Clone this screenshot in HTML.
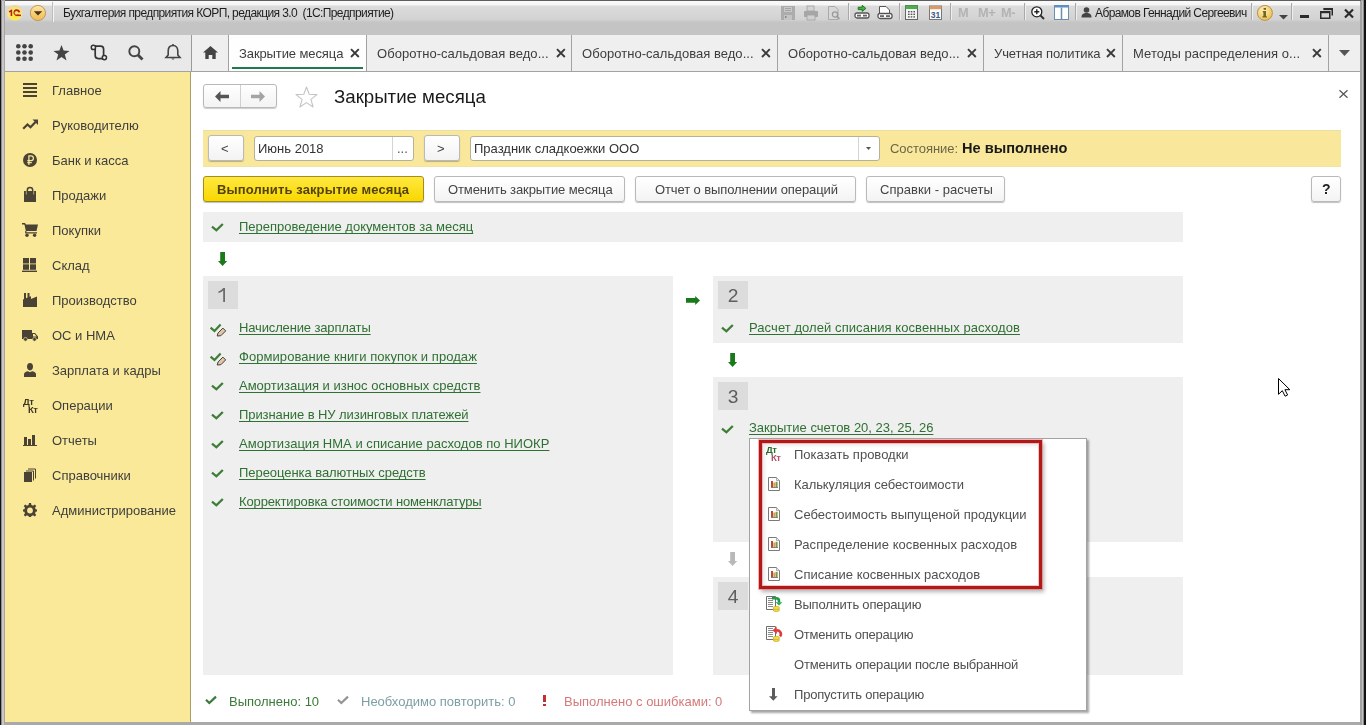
<!DOCTYPE html>
<html><head><meta charset="utf-8">
<style>
*{box-sizing:border-box;margin:0;padding:0}
html,body{width:1366px;height:725px;overflow:hidden;background:#fff;font-family:"Liberation Sans",sans-serif;font-size:13px;color:#4d4d4d}
.a{position:absolute}
.t{position:absolute;white-space:pre;line-height:15px;font-size:13px;will-change:transform}
svg{position:absolute;overflow:visible}
#win{position:absolute;left:0;top:0;width:1366px;height:725px;background:#a8a8a8;overflow:hidden}
#title{left:5px;top:0;width:1356px;height:35px;background:linear-gradient(#5e5e5e 0,#5e5e5e 1px,#fafafa 1px,#f6f6f6 5px,#dcdcdc 6px,#d2d2d2 20px,#c9c9c9 21px,#c4c4c4 23px,#c4c4c4 35px)}
#tabbar{left:5px;top:35px;width:1355px;height:37px;background:#efefef;border-bottom:1px solid #a3a3a3}
#navp{left:5px;top:35px;width:186px;height:36px;background:#e9e9e9}
#side{left:5px;top:72px;width:186px;height:650px;background:#fae998;border-right:1px solid #a89f66}
#main{left:191px;top:72px;width:1169px;height:650px;background:#fff}
.tab{position:absolute;top:35px;height:36px;border-left:1px solid #a2a2a2;background:#efefef}
.tx{position:absolute;top:44px;width:9px;height:9px}
.sep{position:absolute;top:3px;width:1px;height:17px;background:#a9a9a9;box-shadow:1px 0 0 #efefef}
.si{color:#3e3e3e}
.ic{fill:#4a4335}
.btn{position:absolute;border:1px solid #b9b9b9;border-radius:3px;background:linear-gradient(#ffffff,#f3f3f3);box-shadow:0 1px 1px rgba(0,0,0,.25)}
.inp{position:absolute;border:1px solid #b6b19a;border-radius:3px;background:#fff}
.lnk{color:#2f7033;text-decoration:underline;text-underline-offset:2px;text-decoration-thickness:1px;text-decoration-skip-ink:none}
.gblk{position:absolute;background:#efefef}
.num{will-change:transform;position:absolute;width:30px;height:28px;background:#dcdcdc;color:#5e5e5e;font-size:19.2px;line-height:29px;text-align:center}
.mi{color:#505050}
</style></head><body>
<div id="win">
  <div class="a" id="title"></div>
  
<!-- TITLE BAR -->
<svg style="left:6px;top:4px" width="18" height="18" viewBox="0 0 18 18">
 <defs><radialGradient id="g1c" cx="50%" cy="75%" r="70%"><stop offset="0" stop-color="#ffe93a"/><stop offset=".6" stop-color="#fbe87a"/><stop offset="1" stop-color="#f0d890"/></radialGradient></defs>
 <circle cx="8.8" cy="8.8" r="7.7" fill="url(#g1c)"/>
 <path d="M2.8 7.3 L5.6 5.6 L6.2 5.6 L6.2 12.1 L4.6 12.1 L4.6 7.9 L3.2 8.6 Z" fill="#b5250f"/>
 <path d="M14.2 8.2 A3.4 3.4 0 1 0 13.2 11 L11.8 10.2 A1.8 1.8 0 1 1 12.3 8.6 Z" fill="#b5250f"/>
 <rect x="9.6" y="10.6" width="5.4" height="1.5" fill="#b5250f"/>
</svg>
<svg style="left:29px;top:4px" width="18" height="18" viewBox="0 0 18 18">
 <defs><linearGradient id="gdd" x1="0" y1="0" x2="0" y2="1"><stop offset="0" stop-color="#fde7a8"/><stop offset="1" stop-color="#f2b850"/></linearGradient></defs>
 <circle cx="8.9" cy="9" r="7.6" fill="url(#gdd)" stroke="#c29a50" stroke-width="1"/>
 <path d="M4.8 7.2 L13.3 7.2 L9 11.5 Z" fill="#4a3510"/>
</svg>
<div class="a" style="left:52px;top:2px;width:1px;height:20px;background:#bdbdbd;box-shadow:1px 0 0 #f4f4f4"></div>
<div class="t" style="left:63px;top:6px;font-size:12px;letter-spacing:-0.6px;color:#1e1e1e">Бухгалтерия предприятия КОРП, редакция 3.0  (1С:Предприятие)</div>

  
<!-- TOOLBAR ICONS -->
<svg style="left:781px;top:6px" width="14" height="14" viewBox="0 0 14 14"><path d="M0 0H14V14H0Z" fill="#acacac"/><rect x="3" y="1" width="8" height="5" fill="#c9c9c9"/><path d="M4 2.5H10M4 4.5H10" stroke="#9a9a9a" stroke-width=".8"/><rect x="3" y="9" width="8" height="5" fill="#c4c4c4"/><rect x="4" y="10" width="1.5" height="2" fill="#8a8a8a"/></svg>
<svg style="left:804px;top:6px" width="14" height="14" viewBox="0 0 14 14"><rect x="3" y="0" width="7" height="5" fill="#d4d4d4" stroke="#a0a0a0" stroke-width=".8"/><rect x="0" y="5" width="14" height="6" rx="1" fill="#a6a6a6"/><rect x="3" y="9" width="8" height="5" fill="#d0d0d0" stroke="#a0a0a0" stroke-width=".8"/></svg>
<svg style="left:828px;top:6px" width="14" height="14" viewBox="0 0 14 14"><path d="M0.5 0.5H7L10 3.5V13.5H0.5Z" fill="#d8d8d8" stroke="#a9a9a9"/><circle cx="7" cy="8.5" r="2.6" fill="#d8d8d8" stroke="#9a9a9a" stroke-width="1.3"/><path d="M8.8 10.3L11.5 13" stroke="#9a9a9a" stroke-width="1.6"/></svg>
<div class="sep" style="left:848px"></div>
<svg style="left:854px;top:5px" width="16" height="14" viewBox="0 0 16 14"><path d="M4.2 2.2H8.2V.3L11.9 3.4L8.2 6.5V4.6H4.2Z" fill="#3cb83c" stroke="#1a6a1a" stroke-width=".9" stroke-linejoin="round"/><rect x="1" y="8" width="14" height="5" rx="2" fill="#fff" stroke="#555" stroke-width="1.3"/><rect x="3" y="9.7" width="4" height="1.8" fill="#666"/><rect x="9" y="9.7" width="4" height="1.8" fill="#666"/></svg>
<svg style="left:877px;top:6px" width="16" height="14" viewBox="0 0 16 14"><path d="M2.5 0.5H9L12.5 4V8H2.5Z" fill="#fff" stroke="#555" stroke-width="1"/><rect x="1" y="7.5" width="14" height="5" rx="2" fill="#fff" stroke="#555" stroke-width="1.3"/><rect x="3" y="9.2" width="4" height="1.8" fill="#666"/><rect x="9" y="9.2" width="4" height="1.8" fill="#666"/></svg>
<div class="sep" style="left:899px"></div>
<svg style="left:905px;top:5px" width="13" height="15" viewBox="0 0 13 15"><rect x=".5" y=".5" width="12" height="14" fill="#f4f4f4" stroke="#666"/><rect x=".5" y=".5" width="12" height="3.5" fill="#4cae4c"/><g fill="#555"><rect x="3" y="6" width="1.6" height="1.4"/><rect x="5.7" y="6" width="1.6" height="1.4"/><rect x="8.4" y="6" width="1.6" height="1.4"/><rect x="3" y="8.6" width="1.6" height="1.4"/><rect x="5.7" y="8.6" width="1.6" height="1.4"/><rect x="8.4" y="8.6" width="1.6" height="1.4"/><rect x="3" y="11.2" width="1.6" height="1.4"/><rect x="5.7" y="11.2" width="1.6" height="1.4"/><rect x="8.4" y="11.2" width="1.6" height="1.4"/></g></svg>
<svg style="left:929px;top:5px" width="13" height="15" viewBox="0 0 13 15"><rect x=".5" y="1" width="12" height="13.5" fill="#fafafa" stroke="#777"/><rect x=".5" y="1" width="12" height="3.2" fill="#d99a6a"/><text x="6.5" y="12.8" font-family="Liberation Sans" font-size="8.5" font-weight="bold" fill="#3a5a8a" text-anchor="middle">31</text></svg>
<div class="sep" style="left:950px"></div>
<div class="t" style="left:958px;top:5px;font-size:12.8px;font-weight:bold;color:#b3b3b3;line-height:15px">M</div>
<div class="t" style="left:978px;top:5px;font-size:12.8px;letter-spacing:-0.5px;font-weight:bold;color:#b3b3b3;line-height:15px">M+</div>
<div class="t" style="left:1001px;top:5px;font-size:12.8px;letter-spacing:-0.5px;font-weight:bold;color:#b3b3b3;line-height:15px">M-</div>
<div class="sep" style="left:1024px"></div>
<svg style="left:1031px;top:6px" width="14" height="14" viewBox="0 0 14 14"><circle cx="5.8" cy="5.8" r="5" fill="#fff" stroke="#222" stroke-width="1.3"/><path d="M3.3 5.8H8.3M5.8 3.3V8.3" stroke="#222" stroke-width="1.4"/><path d="M9.5 9.5L13 13" stroke="#333" stroke-width="2"/></svg>
<svg style="left:1054px;top:5px" width="15" height="15" viewBox="0 0 15 15"><rect x=".5" y=".5" width="14" height="14" fill="#fff" stroke="#6b8db0"/><rect x=".5" y=".5" width="14" height="2" fill="#5b8fc8"/><path d="M7.5 2.5V14.5" stroke="#6b8db0" stroke-width="1.5"/></svg>
<div class="sep" style="left:1075px"></div>
<svg style="left:1081px;top:7px" width="11" height="11" viewBox="0 0 11 11"><circle cx="5.5" cy="3" r="2.8" fill="#444"/><path d="M0.5 10.5C0.5 7 2.5 6 5.5 6S10.5 7 10.5 10.5Z" fill="#444"/></svg>
<div class="t" style="left:1095px;top:6px;font-size:12px;letter-spacing:-0.62px;color:#1e1e1e">Абрамов Геннадий Сергеевич</div>
<div class="sep" style="left:1251px"></div>
<svg style="left:1256px;top:4px" width="18" height="18" viewBox="0 0 18 18"><defs><radialGradient id="ginf" cx="40%" cy="35%" r="70%"><stop offset="0" stop-color="#fff2b8"/><stop offset="1" stop-color="#eebb50"/></radialGradient></defs><circle cx="8.9" cy="8.9" r="7.5" fill="url(#ginf)" stroke="#b39650" stroke-width="1"/><rect x="7.6" y="4" width="2.4" height="1.8" fill="#7a6020"/><path d="M6.7 7H10V12.2H10.9V13.6H6.4V12.2H7.4V8.3H6.7Z" fill="#6a6a20"/></svg>
<svg style="left:1279px;top:15px" width="9" height="5" viewBox="0 0 9 5"><path d="M0 0H9L4.5 4.5Z" fill="#444"/></svg>
<div class="sep" style="left:1291px"></div>
<div class="a" style="left:1300px;top:15px;width:9px;height:3px;background:#2b2b2b"></div>
<svg style="left:1320px;top:8px" width="13" height="11" viewBox="0 0 13 11"><path d="M3.5 .75H12.25V7.5" fill="none" stroke="#2b2b2b" stroke-width="1.5"/><rect x=".75" y="3.75" width="9" height="6.5" fill="none" stroke="#2b2b2b" stroke-width="1.5"/><rect x=".75" y="3.2" width="9" height="2" fill="#2b2b2b"/><rect x="3.5" y=".3" width="8.8" height="1.8" fill="#2b2b2b"/></svg>
<svg style="left:1344px;top:9px" width="10" height="9" viewBox="0 0 10 9"><path d="M1 .5L9 8.5M9 .5L1 8.5" stroke="#2b2b2b" stroke-width="2.2"/></svg>

  <div class="a" id="tabbar"></div>
  <div class="a" id="navp"></div>
  
<!-- NAV PANEL ICONS -->
<svg style="left:16px;top:44px" width="17" height="17" viewBox="0 0 17 17"><g fill="#444"><circle cx="2.3" cy="2.3" r="2.3"/><circle cx="8.5" cy="2.3" r="2.3"/><circle cx="14.7" cy="2.3" r="2.3"/><circle cx="2.3" cy="8.5" r="2.3"/><circle cx="8.5" cy="8.5" r="2.3"/><circle cx="14.7" cy="8.5" r="2.3"/><circle cx="2.3" cy="14.7" r="2.3"/><circle cx="8.5" cy="14.7" r="2.3"/><circle cx="14.7" cy="14.7" r="2.3"/></g></svg>
<svg style="left:53px;top:45px" width="17" height="16" viewBox="0 0 17 16"><path d="M8.5 0L10.6 5.6L16.5 5.9L11.8 9.6L13.5 15.5L8.5 12.1L3.5 15.5L5.2 9.6L.5 5.9L6.4 5.6Z" fill="#444"/></svg>
<svg style="left:85px;top:40px" width="28" height="26" viewBox="0 0 28 26"><path d="M8.4 6.2H15.6A3 3 0 0 1 18.6 9.2V17.4M10.2 7.6V15.6A3 3 0 0 0 13.2 18.6H19.4" fill="none" stroke="#333" stroke-width="1.7"/><circle cx="8.4" cy="7.4" r="2.1" fill="#f2f2f2" stroke="#333" stroke-width="1.5"/><circle cx="19.4" cy="17.6" r="2.1" fill="#f2f2f2" stroke="#333" stroke-width="1.5"/></svg>
<svg style="left:128px;top:45px" width="16" height="16" viewBox="0 0 16 16"><circle cx="6.3" cy="6.3" r="5" fill="none" stroke="#444" stroke-width="1.9"/><path d="M10 10L14.5 14.5" stroke="#444" stroke-width="2.8"/></svg>
<svg style="left:165px;top:44px" width="16" height="17" viewBox="0 0 16 17"><path d="M8 1.5C4.6 1.5 3.2 4 3.2 7V11L1 13.5H15L12.8 11V7C12.8 4 11.4 1.5 8 1.5Z" fill="none" stroke="#444" stroke-width="1.6"/><circle cx="8" cy="1.2" r="1.1" fill="#444"/><path d="M6.2 14.5Q8 16.8 9.8 14.5Z" fill="#444"/></svg>

<!-- TABS -->
<div class="tab" style="left:191px;width:37px;background:#efefef;border-left:1px solid #9a9a9a"></div>
<svg style="left:203px;top:46px" width="15" height="13" viewBox="0 0 15 13"><path d="M7.5 0L15 6.5H12.7V13H9.3V9H5.7V13H2.3V6.5H0Z" fill="#444"/></svg>
<div class="tab" style="left:228px;width:139px;background:#fefefe"></div>
<div class="a" style="left:232px;top:67px;width:131px;height:2px;background:#1e7a4e"></div>
<div class="t" style="left:239px;top:46px;color:#3d3d3d;letter-spacing:-0.1px">Закрытие месяца</div>
<div class="tab" style="left:366px;width:206px"></div>
<div class="t" style="left:377px;top:46px;color:#3d3d3d;letter-spacing:0.04px">Оборотно-сальдовая ведо...</div>
<div class="tab" style="left:571px;width:207px"></div>
<div class="t" style="left:582px;top:46px;color:#3d3d3d;letter-spacing:0.04px">Оборотно-сальдовая ведо...</div>
<div class="tab" style="left:777px;width:207px"></div>
<div class="t" style="left:788px;top:46px;color:#3d3d3d;letter-spacing:0.04px">Оборотно-сальдовая ведо...</div>
<div class="tab" style="left:983px;width:140px"></div>
<div class="t" style="left:994px;top:46px;color:#3d3d3d;letter-spacing:-0.1px">Учетная политика</div>
<div class="tab" style="left:1122px;width:207px"></div>
<div class="t" style="left:1133px;top:46px;color:#3d3d3d;letter-spacing:0.06px">Методы распределения о...</div>
<div class="tab" style="left:1328px;width:32px"></div>
<svg style="left:1339px;top:50px" width="11" height="6" viewBox="0 0 11 6"><path d="M0 0H11L5.5 6Z" fill="#555"/></svg>
<svg style="left:349.5px;top:48px" width="10" height="10" viewBox="0 0 10 10"><path d="M1 1.2L8.8 9M8.8 1.2L1 9" stroke="#3a3a3a" stroke-width="1.9"/></svg>
<svg style="left:555.5px;top:48px" width="10" height="10" viewBox="0 0 10 10"><path d="M1 1.2L8.8 9M8.8 1.2L1 9" stroke="#3a3a3a" stroke-width="1.9"/></svg>
<svg style="left:760.5px;top:48px" width="10" height="10" viewBox="0 0 10 10"><path d="M1 1.2L8.8 9M8.8 1.2L1 9" stroke="#3a3a3a" stroke-width="1.9"/></svg>
<svg style="left:966.5px;top:48px" width="10" height="10" viewBox="0 0 10 10"><path d="M1 1.2L8.8 9M8.8 1.2L1 9" stroke="#3a3a3a" stroke-width="1.9"/></svg>
<svg style="left:1105.5px;top:48px" width="10" height="10" viewBox="0 0 10 10"><path d="M1 1.2L8.8 9M8.8 1.2L1 9" stroke="#3a3a3a" stroke-width="1.9"/></svg>
<svg style="left:1311.5px;top:48px" width="10" height="10" viewBox="0 0 10 10"><path d="M1 1.2L8.8 9M8.8 1.2L1 9" stroke="#3a3a3a" stroke-width="1.9"/></svg>

  <div class="a" id="side"></div>
  <div class="a" id="main"></div>


<!-- MAIN HEADER -->
<div class="btn" style="left:203px;top:84px;width:74px;height:24px;box-shadow:0 1px 1px rgba(0,0,0,.2)"></div>
<div class="a" style="left:240px;top:85px;width:1px;height:22px;background:#d0d0d0"></div>
<svg style="left:215px;top:91px" width="14" height="11" viewBox="0 0 14 11"><path d="M0 5.5L5.5 0V3.7H14V7.3H5.5V11Z" fill="#555"/></svg>
<svg style="left:251px;top:91px" width="14" height="11" viewBox="0 0 14 11"><path d="M14 5.5L8.5 0V3.7H0V7.3H8.5V11Z" fill="#a4a4a4"/></svg>
<svg style="left:295px;top:86px" width="23" height="22" viewBox="0 0 23 22"><path d="M11.5 1L14.2 8.3L22 8.6L15.9 13.4L18.1 21L11.5 16.6L4.9 21L7.1 13.4L1 8.6L8.8 8.3Z" fill="#fff" stroke="#c4c4c4" stroke-width="1.1" stroke-linejoin="round"/></svg>
<div class="t" style="left:334px;top:86px;font-size:18.67px;line-height:22px;color:#1a1a1a">Закрытие месяца</div>
<svg style="left:1339px;top:90px" width="9" height="8" viewBox="0 0 9 8"><path d="M.5 .2L8.5 7.8M8.5 .2L.5 7.8" stroke="#555" stroke-width="1.2"/></svg>

<!-- STATE BAR -->
<div class="a" style="left:203px;top:130px;width:1138px;height:37px;background:#f9e89b;border-top:1px solid #ecdfa4;border-bottom:1px solid #efe3a8"></div>
<div class="btn" style="left:208px;top:135px;width:36px;height:26px"></div>
<div class="t" style="left:221px;top:141px;color:#444">&lt;</div>
<div class="inp" style="left:254px;top:136px;width:160px;height:25px"></div>
<div class="a" style="left:392px;top:137px;width:1px;height:23px;background:#d4d4d4"></div>
<div class="t" style="left:258px;top:141px;color:#333">Июнь 2018</div>
<div class="t" style="left:397px;top:141px;color:#555">...</div>
<div class="btn" style="left:424px;top:135px;width:36px;height:26px"></div>
<div class="t" style="left:437px;top:141px;color:#444">&gt;</div>
<div class="inp" style="left:470px;top:136px;width:410px;height:25px"></div>
<div class="a" style="left:858px;top:137px;width:1px;height:23px;background:#d4d4d4"></div>
<svg style="left:866px;top:147px" width="5" height="3" viewBox="0 0 5 3"><path d="M0 0H5L2.5 3Z" fill="#555"/></svg>
<div class="t" style="left:474px;top:141px;color:#333">Праздник сладкоежки ООО</div>
<div class="t" style="left:890px;top:141px;color:#6d6548;letter-spacing:-0.05px">Состояние:</div>
<div class="t" style="left:962px;top:140px;font-size:14.6px;line-height:16px;font-weight:bold;color:#1a1a1a">Не выполнено</div>

<!-- BUTTON ROW -->
<div class="a" style="left:203px;top:176px;width:221px;height:26px;border:1px solid #a38d1c;border-radius:3px;background:linear-gradient(#ffe840,#f8d800);box-shadow:0 1px 1px rgba(0,0,0,.25)"></div>
<div class="t" style="left:217px;top:182px;font-weight:bold;color:#544306;letter-spacing:0.12px">Выполнить закрытие месяца</div>
<div class="btn" style="left:434px;top:176px;width:191px;height:26px"></div>
<div class="t" style="left:448px;top:182px;color:#444;letter-spacing:-0.1px">Отменить закрытие месяца</div>
<div class="btn" style="left:635px;top:176px;width:221px;height:26px"></div>
<div class="t" style="left:655px;top:182px;color:#444;letter-spacing:-0.1px">Отчет о выполнении операций</div>
<div class="btn" style="left:866px;top:176px;width:139px;height:26px"></div>
<div class="t" style="left:880px;top:182px;color:#444;letter-spacing:0.05px">Справки - расчеты</div>
<div class="btn" style="left:1311px;top:176px;width:30px;height:26px"></div>
<div class="t" style="left:1322px;top:182px;font-weight:bold;color:#222;font-size:14px">?</div>

<!-- ROW 0 -->
<div class="gblk" style="left:203px;top:212px;width:980px;height:30px"></div>
<svg style="left:211px;top:223px" width="13" height="9" viewBox="0 0 13 9"><path d="M1 3.6L5.4 7.3L11.8 1" fill="none" stroke="#3d7d35" stroke-width="2.3"/></svg>
<div class="t lnk" style="left:239px;top:219px">Перепроведение документов за месяц</div>
<svg style="left:218px;top:252px" width="10" height="14" viewBox="0 0 10 14"><path d="M2.2 0H7V9H9.2L4.6 14L0 9H2.2Z" fill="#1a7a1a"/></svg>

<!-- BLOCK 1 -->
<div class="gblk" style="left:203px;top:276px;width:470px;height:399px"></div>
<div class="num" style="left:208px;top:281px"></div>
<svg style="left:218px;top:288px" width="8" height="14" viewBox="0 0 8 14"><path d="M5.2 0H7V14H5.2V2.6C4.2 3.6 2.6 4.5 .5 5.2V3.4C2.6 2.6 4.2 1.4 5.2 0Z" fill="#6b6b6b"/></svg>
<div class="t lnk" style="left:239px;top:320px;letter-spacing:-0.14px">Начисление зарплаты</div>
<svg style="left:210px;top:323px" width="16" height="13" viewBox="0 0 16 13"><path d="M.6 4.6L4.5 8L10.6 1.6" fill="none" stroke="#3d7d35" stroke-width="2.2"/><path d="M7.2 13L8.1 9.9L12.9 5.1L15.7 7.9L10.9 12.7Z" fill="#dcc8a8" stroke="#4a3a30" stroke-width="1"/></svg>
<div class="t lnk" style="left:239px;top:349px;letter-spacing:0.06px">Формирование книги покупок и продаж</div>
<svg style="left:210px;top:352px" width="16" height="13" viewBox="0 0 16 13"><path d="M.6 4.6L4.5 8L10.6 1.6" fill="none" stroke="#3d7d35" stroke-width="2.2"/><path d="M7.2 13L8.1 9.9L12.9 5.1L15.7 7.9L10.9 12.7Z" fill="#dcc8a8" stroke="#4a3a30" stroke-width="1"/></svg>
<div class="t lnk" style="left:239px;top:378px">Амортизация и износ основных средств</div>
<svg style="left:211px;top:382px" width="13" height="9" viewBox="0 0 13 9"><path d="M1 3.6L5.4 7.3L11.8 1" fill="none" stroke="#3d7d35" stroke-width="2.3"/></svg>
<div class="t lnk" style="left:239px;top:407px;letter-spacing:-0.08px">Признание в НУ лизинговых платежей</div>
<svg style="left:211px;top:411px" width="13" height="9" viewBox="0 0 13 9"><path d="M1 3.6L5.4 7.3L11.8 1" fill="none" stroke="#3d7d35" stroke-width="2.3"/></svg>
<div class="t lnk" style="left:239px;top:436px;letter-spacing:0.025px">Амортизация НМА и списание расходов по НИОКР</div>
<svg style="left:211px;top:440px" width="13" height="9" viewBox="0 0 13 9"><path d="M1 3.6L5.4 7.3L11.8 1" fill="none" stroke="#3d7d35" stroke-width="2.3"/></svg>
<div class="t lnk" style="left:239px;top:465px;letter-spacing:-0.055px">Переоценка валютных средств</div>
<svg style="left:211px;top:469px" width="13" height="9" viewBox="0 0 13 9"><path d="M1 3.6L5.4 7.3L11.8 1" fill="none" stroke="#3d7d35" stroke-width="2.3"/></svg>
<div class="t lnk" style="left:239px;top:494px;letter-spacing:-0.13px">Корректировка стоимости номенклатуры</div>
<svg style="left:211px;top:498px" width="13" height="9" viewBox="0 0 13 9"><path d="M1 3.6L5.4 7.3L11.8 1" fill="none" stroke="#3d7d35" stroke-width="2.3"/></svg>

<svg style="left:686px;top:296px" width="14" height="9" viewBox="0 0 14 9"><path d="M0 2H9.2V0L14 4.4L9.2 9V6.8H0Z" fill="#1a7a1a"/></svg>

<!-- BLOCK 2 -->
<div class="gblk" style="left:713px;top:276px;width:470px;height:67px"></div>
<div class="num" style="left:718px;top:281px">2</div>
<svg style="left:721px;top:324px" width="13" height="9" viewBox="0 0 13 9"><path d="M1 3.6L5.4 7.3L11.8 1" fill="none" stroke="#3d7d35" stroke-width="2.3"/></svg>
<div class="t lnk" style="left:749px;top:320px;letter-spacing:0.07px">Расчет долей списания косвенных расходов</div>
<svg style="left:728px;top:353px" width="10" height="14" viewBox="0 0 10 14"><path d="M2.2 0H7V9H9.2L4.6 14L0 9H2.2Z" fill="#1a7a1a"/></svg>

<!-- BLOCK 3 -->
<div class="gblk" style="left:713px;top:377px;width:470px;height:165px"></div>
<div class="num" style="left:718px;top:382px">3</div>
<svg style="left:721px;top:425px" width="13" height="9" viewBox="0 0 13 9"><path d="M1 3.6L5.4 7.3L11.8 1" fill="none" stroke="#3d7d35" stroke-width="2.3"/></svg>
<div class="t lnk" style="left:749px;top:420px">Закрытие счетов 20, 23, 25, 26</div>
<svg style="left:728px;top:552px" width="10" height="14" viewBox="0 0 10 14"><path d="M2.2 0H7V9H9.2L4.6 14L0 9H2.2Z" fill="#b9b9b9"/></svg>

<!-- BLOCK 4 -->
<div class="gblk" style="left:713px;top:577px;width:470px;height:98px"></div>
<div class="num" style="left:718px;top:582px">4</div>

<!-- STATUS -->
<svg style="left:205px;top:696px" width="12" height="8" viewBox="0 0 12 8"><path d="M1 3.8L4.3 7L11 .6" fill="none" stroke="#3a7a3a" stroke-width="2.2"/></svg>
<div class="t" style="left:229px;top:694px;color:#3b7a3b">Выполнено: 10</div>
<svg style="left:337px;top:696px" width="12" height="8" viewBox="0 0 12 8"><path d="M1 3.8L4.3 7L11 .6" fill="none" stroke="#959595" stroke-width="2.2"/></svg>
<div class="t" style="left:361px;top:694px;color:#7c9ea4">Необходимо повторить: 0</div>
<div class="a" style="left:543px;top:695px;width:3px;height:7px;background:#c03030"></div>
<div class="a" style="left:543px;top:704px;width:3px;height:2px;background:#c03030"></div>
<div class="t" style="left:564px;top:694px;color:#d47a7a">Выполнено с ошибками: 0</div>


<!-- CONTEXT MENU -->
<div class="a" style="left:749px;top:438px;width:338px;height:273px;background:#fff;border:1px solid #a3a3a3;box-shadow:2px 2px 2px rgba(0,0,0,.35)"></div>
<div class="a" style="left:759px;top:440px;width:283px;height:149px;border:3px solid #b31818;box-shadow:0 0 0 1px rgba(235,120,120,.55), 2px 3px 4px rgba(0,0,0,.3), inset 0 0 0 1px rgba(235,130,130,.45), inset 2px 2px 4px rgba(0,0,0,.12)"></div>
<div class="t mi" style="left:794px;top:447px">Показать проводки</div>
<div class="t mi" style="left:794px;top:477px;letter-spacing:-0.08px">Калькуляция себестоимости</div>
<div class="t mi" style="left:794px;top:507px">Себестоимость выпущеной продукции</div>
<div class="t mi" style="left:794px;top:537px;letter-spacing:0.07px">Распределение косвенных расходов</div>
<div class="t mi" style="left:794px;top:567px">Списание косвенных расходов</div>
<div class="t mi" style="left:794px;top:597px;letter-spacing:-0.2px">Выполнить операцию</div>
<div class="t mi" style="left:794px;top:627px;letter-spacing:-0.25px">Отменить операцию</div>
<div class="t mi" style="left:794px;top:657px;letter-spacing:-0.2px">Отменить операции после выбранной</div>
<div class="t mi" style="left:794px;top:687px;letter-spacing:-0.19px">Пропустить операцию</div>
<svg style="left:768px;top:477px" width="12" height="14" viewBox="0 0 12 14"><path d="M.5 .5H8.5L11.5 3.5V13.5H.5Z" fill="#fff" stroke="#7a7a7a"/><path d="M8.5 .5V3.5H11.5" fill="#e8e8e8" stroke="#9a9a9a" stroke-width=".8"/><rect x="3" y="4" width="2" height="6.5" fill="#b8483a"/><rect x="5.3" y="5.5" width="2" height="5" fill="#d9a050"/><rect x="7.6" y="4.8" width="2" height="5.7" fill="#7a9a48"/><path d="M3 10.5H10" stroke="#7a6a5a" stroke-width=".8"/></svg>
<svg style="left:768px;top:507px" width="12" height="14" viewBox="0 0 12 14"><path d="M.5 .5H8.5L11.5 3.5V13.5H.5Z" fill="#fff" stroke="#7a7a7a"/><path d="M8.5 .5V3.5H11.5" fill="#e8e8e8" stroke="#9a9a9a" stroke-width=".8"/><rect x="3" y="4" width="2" height="6.5" fill="#b8483a"/><rect x="5.3" y="5.5" width="2" height="5" fill="#d9a050"/><rect x="7.6" y="4.8" width="2" height="5.7" fill="#7a9a48"/><path d="M3 10.5H10" stroke="#7a6a5a" stroke-width=".8"/></svg>
<svg style="left:768px;top:537px" width="12" height="14" viewBox="0 0 12 14"><path d="M.5 .5H8.5L11.5 3.5V13.5H.5Z" fill="#fff" stroke="#7a7a7a"/><path d="M8.5 .5V3.5H11.5" fill="#e8e8e8" stroke="#9a9a9a" stroke-width=".8"/><rect x="3" y="4" width="2" height="6.5" fill="#b8483a"/><rect x="5.3" y="5.5" width="2" height="5" fill="#d9a050"/><rect x="7.6" y="4.8" width="2" height="5.7" fill="#7a9a48"/><path d="M3 10.5H10" stroke="#7a6a5a" stroke-width=".8"/></svg>
<svg style="left:768px;top:567px" width="12" height="14" viewBox="0 0 12 14"><path d="M.5 .5H8.5L11.5 3.5V13.5H.5Z" fill="#fff" stroke="#7a7a7a"/><path d="M8.5 .5V3.5H11.5" fill="#e8e8e8" stroke="#9a9a9a" stroke-width=".8"/><rect x="3" y="4" width="2" height="6.5" fill="#b8483a"/><rect x="5.3" y="5.5" width="2" height="5" fill="#d9a050"/><rect x="7.6" y="4.8" width="2" height="5.7" fill="#7a9a48"/><path d="M3 10.5H10" stroke="#7a6a5a" stroke-width=".8"/></svg>

<div class="a" style="left:765.5px;top:445px;font-family:'Liberation Sans',sans-serif;font-weight:bold;font-size:9.5px;line-height:9px;letter-spacing:-0.5px;will-change:transform;color:#2a6a2a;white-space:pre">Дт</div>
<div class="a" style="left:770.5px;top:453px;font-family:'Liberation Sans',sans-serif;font-weight:bold;font-size:9.5px;line-height:9px;letter-spacing:-0.5px;will-change:transform;color:#b25266;white-space:pre">Кт</div>
<svg style="left:766px;top:596px" width="17" height="17" viewBox="0 0 17 17"><path d="M.5 .5H9.5V13.5H.5Z" fill="#fff" stroke="#6e6e6e"/><path d="M2 2.5H7M2 4.5H7M2 6.5H7M2 8.5H7M2 10.5H7" stroke="#8a8a8a" stroke-width="1"/><path d="M6 2.3H10.2A2.8 2.8 0 0 1 13 5.1V6.6" fill="none" stroke="#1f9a48" stroke-width="2.6"/><path d="M9.6 6.2H16.3L13 9.6Z" fill="#2aa84e"/><ellipse cx="10.3" cy="13.9" rx="3.2" ry="1.6" fill="#f5dc4a" stroke="#c4a828" stroke-width=".7"/><ellipse cx="10.3" cy="11.9" rx="3.2" ry="1.6" fill="#f5dc4a" stroke="#c4a828" stroke-width=".7"/></svg>
<svg style="left:766px;top:626px" width="17" height="17" viewBox="0 0 17 17"><path d="M.5 .5H9.5V13.5H.5Z" fill="#fff" stroke="#6e6e6e"/><path d="M2 2.5H7M2 4.5H7M2 6.5H7M2 8.5H7M2 10.5H7" stroke="#8a8a8a" stroke-width="1"/><path d="M14 10.3A3.6 3.6 0 0 0 10 4.6" fill="none" stroke="#e03c3c" stroke-width="2.6"/><path d="M6.5 4.4L10.6 .6L11 8Z" fill="#e03c3c"/><ellipse cx="10.3" cy="13.9" rx="3.2" ry="1.6" fill="#f5dc4a" stroke="#c4a828" stroke-width=".7"/><ellipse cx="10.3" cy="11.9" rx="3.2" ry="1.6" fill="#f5dc4a" stroke="#c4a828" stroke-width=".7"/></svg>
<svg style="left:769px;top:688px" width="9" height="13" viewBox="0 0 9 13"><path d="M3 0H6V8.2H8.6L4.3 12.8L0 8.2H3Z" fill="#5c5c5c"/></svg>

<!-- CURSOR -->
<svg style="left:1278px;top:378px" width="13" height="19" viewBox="0 0 13 19"><path d="M.5 .5V16.3L4.3 12.7L7.1 18.2L9.6 17L6.9 11.7H11.8Z" fill="#fff" stroke="#000" stroke-width="1" stroke-linejoin="miter"/></svg>

<!-- WINDOW EDGES -->
<div class="a" style="left:0;top:0;width:1px;height:725px;background:#161616"></div>
<div class="a" style="left:1px;top:1px;width:1px;height:724px;background:#8e8e8e"></div>
<div class="a" style="left:2px;top:1px;width:2px;height:724px;background:#c9c6c9"></div>
<div class="a" style="left:4px;top:1px;width:1px;height:724px;background:#aba59e"></div>
<div class="a" style="left:1360px;top:1px;width:2px;height:724px;background:#a2a2a2"></div>
<div class="a" style="left:1362px;top:1px;width:1px;height:724px;background:#c2c2c2"></div>
<div class="a" style="left:1363px;top:0;width:1px;height:725px;background:#8a8a8a"></div>
<div class="a" style="left:1364px;top:0;width:2px;height:725px;background:#111"></div>
<div class="a" style="left:5px;top:722px;width:1355px;height:3px;background:#a9a9a9"></div>

<!-- SIDEBAR -->
<div class="t si" style="left:52px;top:83px">Главное</div>
<div class="t si" style="left:52px;top:118px">Руководителю</div>
<div class="t si" style="left:52px;top:153px">Банк и касса</div>
<div class="t si" style="left:52px;top:188px">Продажи</div>
<div class="t si" style="left:52px;top:223px">Покупки</div>
<div class="t si" style="left:52px;top:258px">Склад</div>
<div class="t si" style="left:52px;top:293px">Производство</div>
<div class="t si" style="left:52px;top:328px">ОС и НМА</div>
<div class="t si" style="left:52px;top:363px">Зарплата и кадры</div>
<div class="t si" style="left:52px;top:398px">Операции</div>
<div class="t si" style="left:52px;top:433px">Отчеты</div>
<div class="t si" style="left:52px;top:468px">Справочники</div>
<div class="t si" style="left:52px;top:503px">Администрирование</div>

<svg style="left:23px;top:83px" width="14" height="14" viewBox="0 0 14 14"><g class="ic"><rect x="0" y="0" width="14" height="2"/><rect x="0" y="4" width="14" height="2"/><rect x="0" y="8" width="14" height="2"/><rect x="0" y="12" width="14" height="2"/></g></svg>
<svg style="left:22px;top:119px" width="17" height="11" viewBox="0 0 17 11"><path d="M1.2 9.8L5.5 5.5L8.5 8.2L13.5 3" fill="none" stroke="#4a4335" stroke-width="2.2" stroke-linejoin="miter"/><path d="M10.5 .5H16V6Z" fill="#4a4335"/></svg>
<svg style="left:23px;top:153px" width="14" height="14" viewBox="0 0 14 14"><circle cx="7" cy="7" r="7" fill="#4a4335"/><path d="M5.9 12V2.9H8.1A2.3 2.3 0 0 1 8.1 7.5H4.3M4.3 9.5H8.8" fill="none" stroke="#fae998" stroke-width="1.25"/></svg>
<svg style="left:24px;top:187px" width="12" height="15" viewBox="0 0 12 15"><path d="M0 4H12V15H0Z" fill="#4a4335"/><path d="M3.3 7.5V3.2A2.7 2.7 0 0 1 8.7 3.2V7.5" fill="none" stroke="#4a4335" stroke-width="1.5"/><path d="M2.3 4.2V7.5M9.7 4.2V7.5" stroke="#fae998" stroke-width=".6"/></svg>
<svg style="left:22px;top:223px" width="16" height="14" viewBox="0 0 16 14"><path d="M0 .7H2.6L3.4 2" fill="none" stroke="#4a4335" stroke-width="1.4"/><path d="M2.5 1.5H16L14.5 8H3.8Z" fill="#4a4335"/><path d="M3.8 8V9.8H15" fill="none" stroke="#4a4335" stroke-width="1.2"/><circle cx="5" cy="12.3" r="1.7" fill="#4a4335"/><circle cx="12.6" cy="12.3" r="1.7" fill="#4a4335"/></svg>
<svg style="left:22px;top:258px" width="15" height="14" viewBox="0 0 15 14"><g class="ic"><rect x="1" y="0" width="6" height="5.5"/><rect x="8" y="0" width="6" height="5.5"/><rect x="1" y="6.3" width="6" height="5.5"/><rect x="8" y="6.3" width="6" height="5.5"/><rect x="0" y="12.6" width="15" height="1.4"/></g></svg>
<svg style="left:23px;top:293px" width="14" height="14" viewBox="0 0 14 14"><path d="M0 14V6.5L1 6V0H3V5.2L4.5 4.6V0H6.5V3.8L8 3.2V6L14 3.5V14Z" fill="#4a4335"/></svg>
<svg style="left:22px;top:330px" width="16" height="11" viewBox="0 0 16 11"><path d="M0 0H10V3H13L16 6.5V9H0Z" fill="#4a4335"/><path d="M11 4H12.6L14.6 6.6H11Z" fill="#fae998"/><circle cx="3.5" cy="9.3" r="1.9" fill="#4a4335" stroke="#fae998" stroke-width=".6"/><circle cx="12.5" cy="9.3" r="1.9" fill="#4a4335" stroke="#fae998" stroke-width=".6"/></svg>
<svg style="left:24px;top:363px" width="12" height="14" viewBox="0 0 12 14"><path d="M6 0C8 0 9 1.6 9 3.6C9 5.6 8 7.5 6 7.5C4 7.5 3 5.6 3 3.6C3 1.6 4 0 6 0Z" fill="#4a4335"/><path d="M0 14V11.2C0 9.5 2 8.5 4 8.2L6 9.2L8 8.2C10 8.5 12 9.5 12 11.2V14Z" fill="#4a4335"/></svg>
<div class="a" style="left:23px;top:397px;font-family:'Liberation Sans',sans-serif;font-weight:bold;font-size:9.5px;line-height:9px;letter-spacing:-0.5px;will-change:transform;color:#3d3626;white-space:pre">Дт</div>
<div class="a" style="left:28px;top:405px;font-family:'Liberation Sans',sans-serif;font-weight:bold;font-size:9.5px;line-height:9px;letter-spacing:-0.5px;will-change:transform;color:#3d3626;white-space:pre">Кт</div>
<svg style="left:23px;top:435px" width="14" height="11" viewBox="0 0 14 11"><g class="ic"><rect x="1" y="2" width="3" height="8"/><rect x="5" y="4" width="3" height="6"/><rect x="9" y="0" width="3" height="10"/><rect x="0" y="10" width="14" height="1"/></g></svg>
<svg style="left:24px;top:468px" width="12" height="14" viewBox="0 0 12 14"><rect x="0" y="4" width="8" height="10" fill="#4a4335"/><path d="M2 3H9.5V12.5M4 1H11.5V10.5" fill="none" stroke="#4a4335" stroke-width="1"/></svg>
<svg style="left:23px;top:503px" width="14" height="14" viewBox="0 0 14 14"><path d="M6 0H8L8.4 2.1A5 5 0 0 1 10 2.8L11.8 1.6L13.2 3L12 4.8A5 5 0 0 1 12.6 6.3L14 6.6V8.4L12.6 8.7A5 5 0 0 1 12 10.3L13.2 12L11.8 13.4L10 12.2A5 5 0 0 1 8.4 12.9L8 14H6L5.6 12.9A5 5 0 0 1 4 12.2L2.2 13.4L.8 12L2 10.3A5 5 0 0 1 1.4 8.7L0 8.4V6.6L1.4 6.3A5 5 0 0 1 2 4.8L.8 3L2.2 1.6L4 2.8A5 5 0 0 1 5.6 2.1Z M7 4.6A2.9 2.9 0 1 0 7 10.4A2.9 2.9 0 1 0 7 4.6Z" fill="#4a4335" fill-rule="evenodd"/></svg>

</div>
</body></html>
